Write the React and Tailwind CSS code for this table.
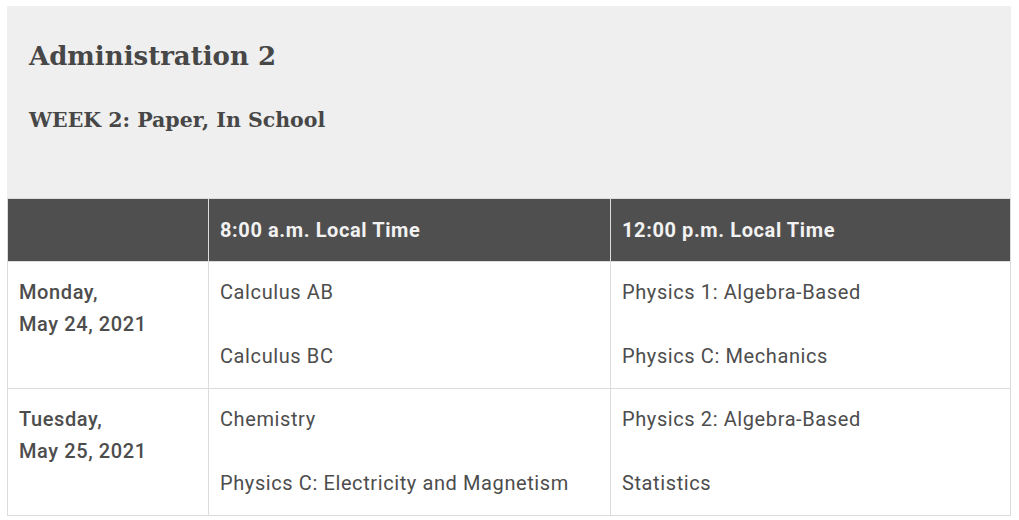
export default function App() {
  const rows = [
    {
      day: 'Monday,',
      date: 'May 24, 2021',
      am: ['Calculus AB', 'Calculus BC'],
      pm: ['Physics 1: Algebra-Based', 'Physics C: Mechanics'],
    },
    {
      day: 'Tuesday,',
      date: 'May 25, 2021',
      am: ['Chemistry', 'Physics C: Electricity and Magnetism'],
      pm: ['Physics 2: Algebra-Based', 'Statistics'],
    },
  ]

  return (
    <div className="bg-white pl-[7px] pr-[8px] pt-[6px] font-['Roboto',sans-serif] text-[#4d4d4d]">
      <div className="h-[192px] bg-[#efefef] px-[22px] pt-[30px]">
        <h2 className="font-['DejaVu_Serif',serif] text-[26px] font-bold leading-[40px] text-[#474747]">
          Administration 2
        </h2>
        <h3 className="mt-[28px] font-['DejaVu_Serif',serif] text-[20.5px] font-bold leading-[32px] text-[#474747]">
          WEEK 2: Paper, In School
        </h3>
      </div>

      <table className="w-full table-fixed border-collapse text-[20px] tracking-[0.6px]">
        <colgroup>
          <col className="w-[201px]" />
          <col className="w-[402px]" />
          <col />
        </colgroup>
        <thead>
          <tr className="h-[63px] bg-[#504f4f] text-left text-[#f2f2f2]">
            <th className="border border-[#dcdcdc] px-[11px] font-bold"></th>
            <th className="border border-[#dcdcdc] px-[11px] font-bold">8:00 a.m. Local Time</th>
            <th className="border border-[#dcdcdc] px-[11px] font-bold">12:00 p.m. Local Time</th>
          </tr>
        </thead>
        <tbody>
          {rows.map((r) => (
            <tr key={r.date}>
              <td className="border border-[#dcdcdc] px-[11px] pt-[14px] pb-[16px] align-top font-medium leading-[32px]">
                <p>{r.day}</p>
                <p>{r.date}</p>
              </td>
              <td className="border border-[#dcdcdc] px-[11px] pt-[14px] pb-[16px] align-top leading-[32px]">
                <p>{r.am[0]}</p>
                <p className="mt-[32px]">{r.am[1]}</p>
              </td>
              <td className="border border-[#dcdcdc] px-[11px] pt-[14px] pb-[16px] align-top leading-[32px]">
                <p>{r.pm[0]}</p>
                <p className="mt-[32px]">{r.pm[1]}</p>
              </td>
            </tr>
          ))}
        </tbody>
      </table>
    </div>
  )
}
